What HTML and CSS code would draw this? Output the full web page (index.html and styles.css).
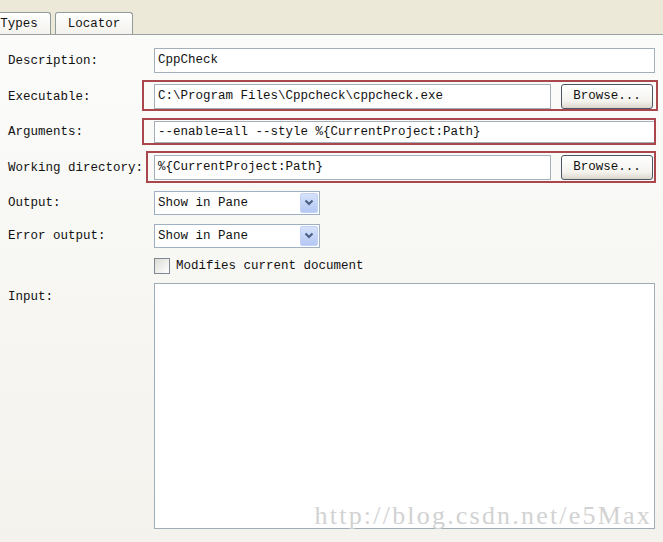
FILE: index.html
```html
<!DOCTYPE html>
<html>
<head>
<meta charset="utf-8">
<link rel="stylesheet" href="styles.css">
</head>
<body>
<div class="window">
  <div class="tabbar">
    <div class="tab tab-types">Types</div>
    <div class="tab tab-locator">Locator</div>
  </div>
  <div class="page">
    <div class="row r-desc">
      <div class="lbl">Description:</div>
      <div class="input grow">CppCheck</div>
    </div>
    <div class="row r-exec">
      <div class="lbl">Executable:</div>
      <div class="input grow">C:\Program Files\Cppcheck\cppcheck.exe</div>
      <div class="btn">Browse...</div>
      <div class="mark mark-exec"></div>
    </div>
    <div class="row r-args">
      <div class="lbl">Arguments:</div>
      <div class="input grow">--enable=all --style %{CurrentProject:Path}</div>
      <div class="mark mark-args"></div>
    </div>
    <div class="row r-work">
      <div class="lbl">Working directory:</div>
      <div class="input grow">%{CurrentProject:Path}</div>
      <div class="btn">Browse...</div>
      <div class="mark mark-work"></div>
    </div>
    <div class="row r-out">
      <div class="lbl">Output:</div>
      <div class="combo">
        <span class="combo-text">Show in Pane</span>
        <span class="combo-btn"><svg width="10" height="8" viewBox="0 0 10 8"><polyline points="1.5,1.5 5,5 8.5,1.5" fill="none" stroke="#4d6185" stroke-width="2.2"/></svg></span>
      </div>
    </div>
    <div class="row r-err">
      <div class="lbl">Error output:</div>
      <div class="combo">
        <span class="combo-text">Show in Pane</span>
        <span class="combo-btn"><svg width="10" height="8" viewBox="0 0 10 8"><polyline points="1.5,1.5 5,5 8.5,1.5" fill="none" stroke="#4d6185" stroke-width="2.2"/></svg></span>
      </div>
    </div>
    <div class="row r-chk">
      <div class="lbl"></div>
      <span class="checkbox"></span>
      <span class="chk-text">Modifies current document</span>
    </div>
    <div class="row r-input">
      <div class="lbl lbl-top">Input:</div>
      <div class="textarea grow"></div>
    </div>
  </div>
  <div class="watermark">http://blog.csdn.net/e5Max</div>
</div>
</body>
</html>
```

FILE: styles.css
```css
html, body {
  margin: 0;
  padding: 0;
}
body {
  width: 663px;
  height: 542px;
  overflow: hidden;
  font-family: "Liberation Mono", "DejaVu Sans Mono", monospace;
  font-size: 12.5px;
  color: #111;
}
.window {
  position: relative;
  width: 663px;
  height: 542px;
  background: linear-gradient(#fcfcfb, #f3f2ed);
}
.tabbar {
  height: 34px;
  background: #ece9d8;
  border-bottom: 1px solid #9aa1a2;
  display: flex;
  align-items: flex-end;
  gap: 4px;
}
.tab {
  height: 21px;
  line-height: 23px;
  border: 1px solid #919b9c;
  border-bottom: none;
  border-radius: 3px 3px 0 0;
  background: linear-gradient(#ffffff, #f3f2ec);
  box-sizing: content-box;
  text-align: center;
}
.tab-types {
  margin-left: -13px;
  width: 62px;
}
.tab-locator {
  width: 76px;
}
.page {
  padding: 13px 8px 0 8px;
  display: flex;
  flex-direction: column;
  gap: 11px;
}
.row {
  position: relative;
  display: flex;
  align-items: center;
}
.lbl {
  width: 146px;
  flex: none;
  white-space: nowrap;
}
.lbl-top {
  align-self: flex-start;
  padding-top: 7px;
}
.grow {
  flex: 1;
}
.input {
  box-sizing: border-box;
  height: 25px;
  line-height: 23px;
  border: 1px solid #a3afba;
  background: #fff;
  padding: 0 3px;
  white-space: nowrap;
  overflow: hidden;
}
.r-args .input {
  height: 22px;
  line-height: 20px;
}
.r-args { margin-top: 1px; }
.r-work { margin-top: 1px; }
.r-out { margin-top: 0; }
.r-err { margin-top: -2px; }
.r-chk { margin-top: -1px; }
.r-input { margin-top: -2px; }
.btn {
  box-sizing: border-box;
  width: 92px;
  height: 25px;
  line-height: 23px;
  margin-left: 10px;
  margin-right: 2px;
  text-align: center;
  border: 1px solid #4a5666;
  border-radius: 3px;
  background: linear-gradient(#ffffff, #f4f3ee 70%, #dcd7cc);
  flex: none;
}
.mark {
  position: absolute;
  box-sizing: border-box;
  border: 2px solid #a9474c;
  pointer-events: none;
}
.mark-exec {
  left: 134px;
  top: -4px;
  width: 516px;
  height: 31px;
}
.mark-args {
  left: 134px;
  top: -3px;
  width: 514px;
  height: 27px;
}
.mark-work {
  left: 138px;
  top: -4px;
  width: 510px;
  height: 32px;
}
.combo {
  box-sizing: border-box;
  width: 166px;
  height: 24px;
  border: 1px solid #9fb0c2;
  background: #fff;
  display: flex;
  align-items: center;
  justify-content: space-between;
  padding: 1px;
}
.combo-text {
  padding-left: 2px;
}
.combo-btn {
  box-sizing: border-box;
  width: 18px;
  height: 20px;
  border: 1px solid #c3d2f5;
  border-radius: 2px;
  background: linear-gradient(#d6e2fc, #b4c8f4);
  display: flex;
  align-items: center;
  justify-content: center;
}
.r-chk {
  height: 16px;
}
.checkbox {
  box-sizing: border-box;
  width: 16px;
  height: 16px;
  border: 1px solid #7d8a96;
  background: linear-gradient(135deg, #dcdcd6, #ffffff);
  margin-right: 6px;
}
.textarea {
  box-sizing: border-box;
  height: 246px;
  border: 1px solid #9fadb8;
  background: #fff;
}
.watermark {
  position: absolute;
  right: 11px;
  bottom: 12px;
  font-family: "Liberation Serif", "DejaVu Serif", serif;
  font-size: 26px;
  letter-spacing: 2.2px;
  line-height: 28px;
  color: #d2d2d2;
  white-space: nowrap;
}
```
